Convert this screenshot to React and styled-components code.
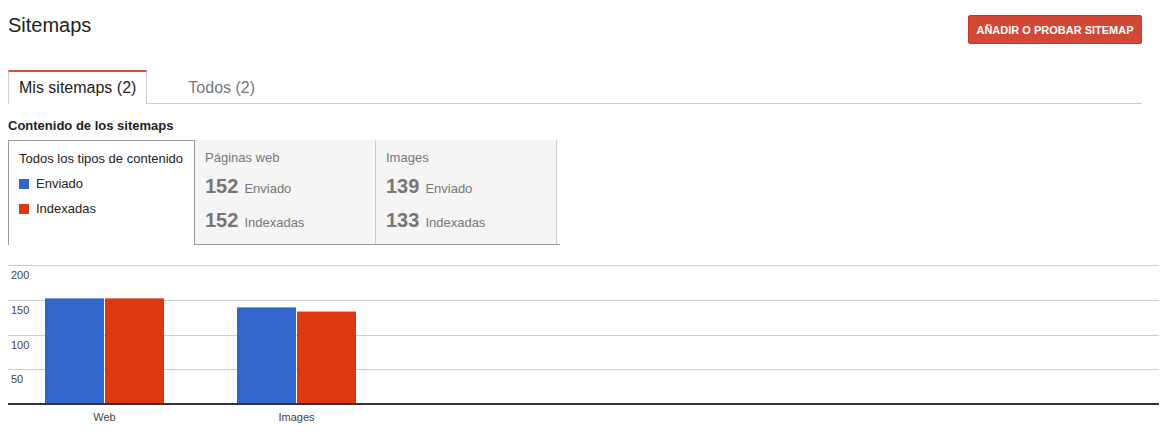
import React from 'react';
import styled, { createGlobalStyle } from 'styled-components';

const GlobalStyle = createGlobalStyle`
  body {
    margin: 0;
    background: #fff;
    font-family: "Liberation Sans", Arial, sans-serif;
    color: #222;
  }
`;

const contentTypes = [
  { title: 'Páginas web', sent: 152, indexed: 152 },
  { title: 'Images', sent: 139, indexed: 133 },
];

const chartData = [
  { label: 'Web', sent: 152, indexed: 152, x: 37 },
  { label: 'Images', sent: 139, indexed: 133, x: 229 },
];

const BLUE = '#3366cc';
const RED = '#dc3912';

function Chart() {
  const base = 139;
  const scale = base / 200;
  return (
    <ChartSvg width="1151" height="170" viewBox="0 0 1151 170">
      {[200, 150, 100, 50].map((v) => {
        const y = Math.round(base - v * scale) + 0.5;
        return (
          <g key={v}>
            <line x1="0" x2="1151" y1={y} y2={y} stroke="#cccccc" strokeWidth="1" />
            <text x="3" y={y + 13} fontSize="11" fill="#444">
              {v}
            </text>
          </g>
        );
      })}
      {chartData.map((d) => (
        <g key={d.label}>
          <rect x={d.x} y={base - d.sent * scale} width="59" height={d.sent * scale} fill={BLUE} />
          <rect x={d.x + 60} y={base - d.indexed * scale} width="59" height={d.indexed * scale} fill={RED} />
          <text x={d.x + 59.5} y="156" fontSize="11" fill="#444" textAnchor="middle">
            {d.label}
          </text>
        </g>
      ))}
      <line x1="0" x2="1151" y1={base} y2={base} stroke="#333" strokeWidth="2" />
    </ChartSvg>
  );
}

export default function App() {
  return (
    <>
      <GlobalStyle />
      <Page>
        <Header>
          <Title>Sitemaps</Title>
          <RedButton>AÑADIR O PROBAR SITEMAP</RedButton>
        </Header>

        <Tabs>
          <Tab active>Mis sitemaps (2)</Tab>
          <Tab>Todos (2)</Tab>
        </Tabs>

        <SectionTitle>Contenido de los sitemaps</SectionTitle>

        <Boxes>
          <SelectedBox>
            <BoxTitle dark>Todos los tipos de contenido</BoxTitle>
            <LegendItem>
              <Swatch color={BLUE} />
              Enviado
            </LegendItem>
            <LegendItem>
              <Swatch color={RED} />
              Indexadas
            </LegendItem>
          </SelectedBox>
          {contentTypes.map((t) => (
            <TypeBox key={t.title}>
              <BoxTitle>{t.title}</BoxTitle>
              <StatRow>
                <StatNum>{t.sent}</StatNum>
                <StatLabel>Enviado</StatLabel>
              </StatRow>
              <StatRow>
                <StatNum>{t.indexed}</StatNum>
                <StatLabel>Indexadas</StatLabel>
              </StatRow>
            </TypeBox>
          ))}
          <Tail />
        </Boxes>

        <Chart />
      </Page>
    </>
  );
}

const Page = styled.div`
  padding: 0 34px 0 8px;
`;

const Header = styled.div`
  display: flex;
  justify-content: space-between;
  align-items: flex-start;
  padding-top: 15px;
`;

const Title = styled.h1`
  margin: -2px 0 0;
  font-size: 20px;
  line-height: 24px;
  font-weight: normal;
  color: #222;
`;

const RedButton = styled.button`
  height: 29px;
  width: 174px;
  padding: 0;
  background: #d14836;
  border: 1px solid #c53727;
  border-radius: 2px;
  color: #fff;
  font-family: "Liberation Sans", Arial, sans-serif;
  font-size: 11px;
  font-weight: bold;
`;

const Tabs = styled.div`
  display: flex;
  margin-top: 26px;
  border-bottom: 1px solid #cccccc;
  height: 33px;
`;

const Tab = styled.div`
  box-sizing: border-box;
  height: 34px;
  padding: 0 10px;
  margin-right: ${(p) => (p.active ? '30px' : '0')};
  display: flex;
  align-items: center;
  white-space: nowrap;
  font-size: 16px;
  color: ${(p) => (p.active ? '#222' : '#777')};
  background: ${(p) => (p.active ? '#fff' : 'transparent')};
  border-top: 2px solid ${(p) => (p.active ? '#dd4b39' : 'transparent')};
  border-left: 1px solid ${(p) => (p.active ? '#cccccc' : 'transparent')};
  border-right: 1px solid ${(p) => (p.active ? '#cccccc' : 'transparent')};
`;

const SectionTitle = styled.div`
  margin-top: 14px;
  font-size: 13px;
  line-height: 16px;
  font-weight: bold;
  color: #222;
`;

const Boxes = styled.div`
  display: flex;
  margin-top: 6px;
  height: 105px;
`;

const SelectedBox = styled.div`
  box-sizing: border-box;
  width: 187px;
  height: 105px;
  padding: 10px 10px 0;
  background: #fff;
  border: 1px solid #999;
  border-bottom: none;
`;

const TypeBox = styled.div`
  box-sizing: border-box;
  width: 181px;
  height: 105px;
  padding: 10px 10px 0;
  background: #f5f5f5;
  border-bottom: 1px solid #999;
  border-right: 1px solid #cccccc;
`;

const Tail = styled.div`
  width: 3px;
  border-bottom: 1px solid #999;
`;

const BoxTitle = styled.div`
  font-size: 13px;
  line-height: 16px;
  color: ${(p) => (p.dark ? '#222' : '#777')};
`;

const LegendItem = styled.div`
  display: flex;
  align-items: center;
  margin-top: 9px;
  font-size: 13px;
  line-height: 16px;
  color: #222;
`;

const Swatch = styled.span`
  width: 10px;
  height: 10px;
  background: ${(p) => p.color};
  margin-right: 7px;
`;

const StatRow = styled.div`
  display: flex;
  align-items: baseline;
  margin-top: 6px;
  height: 28px;
  line-height: 28px;
  color: #777;
`;

const StatNum = styled.span`
  font-size: 20px;
  font-weight: bold;
  margin-right: 6px;
`;

const StatLabel = styled.span`
  font-size: 13px;
`;

const ChartSvg = styled.svg`
  display: block;
  margin-top: 20px;
  font-family: "Liberation Sans", Arial, sans-serif;
`;
